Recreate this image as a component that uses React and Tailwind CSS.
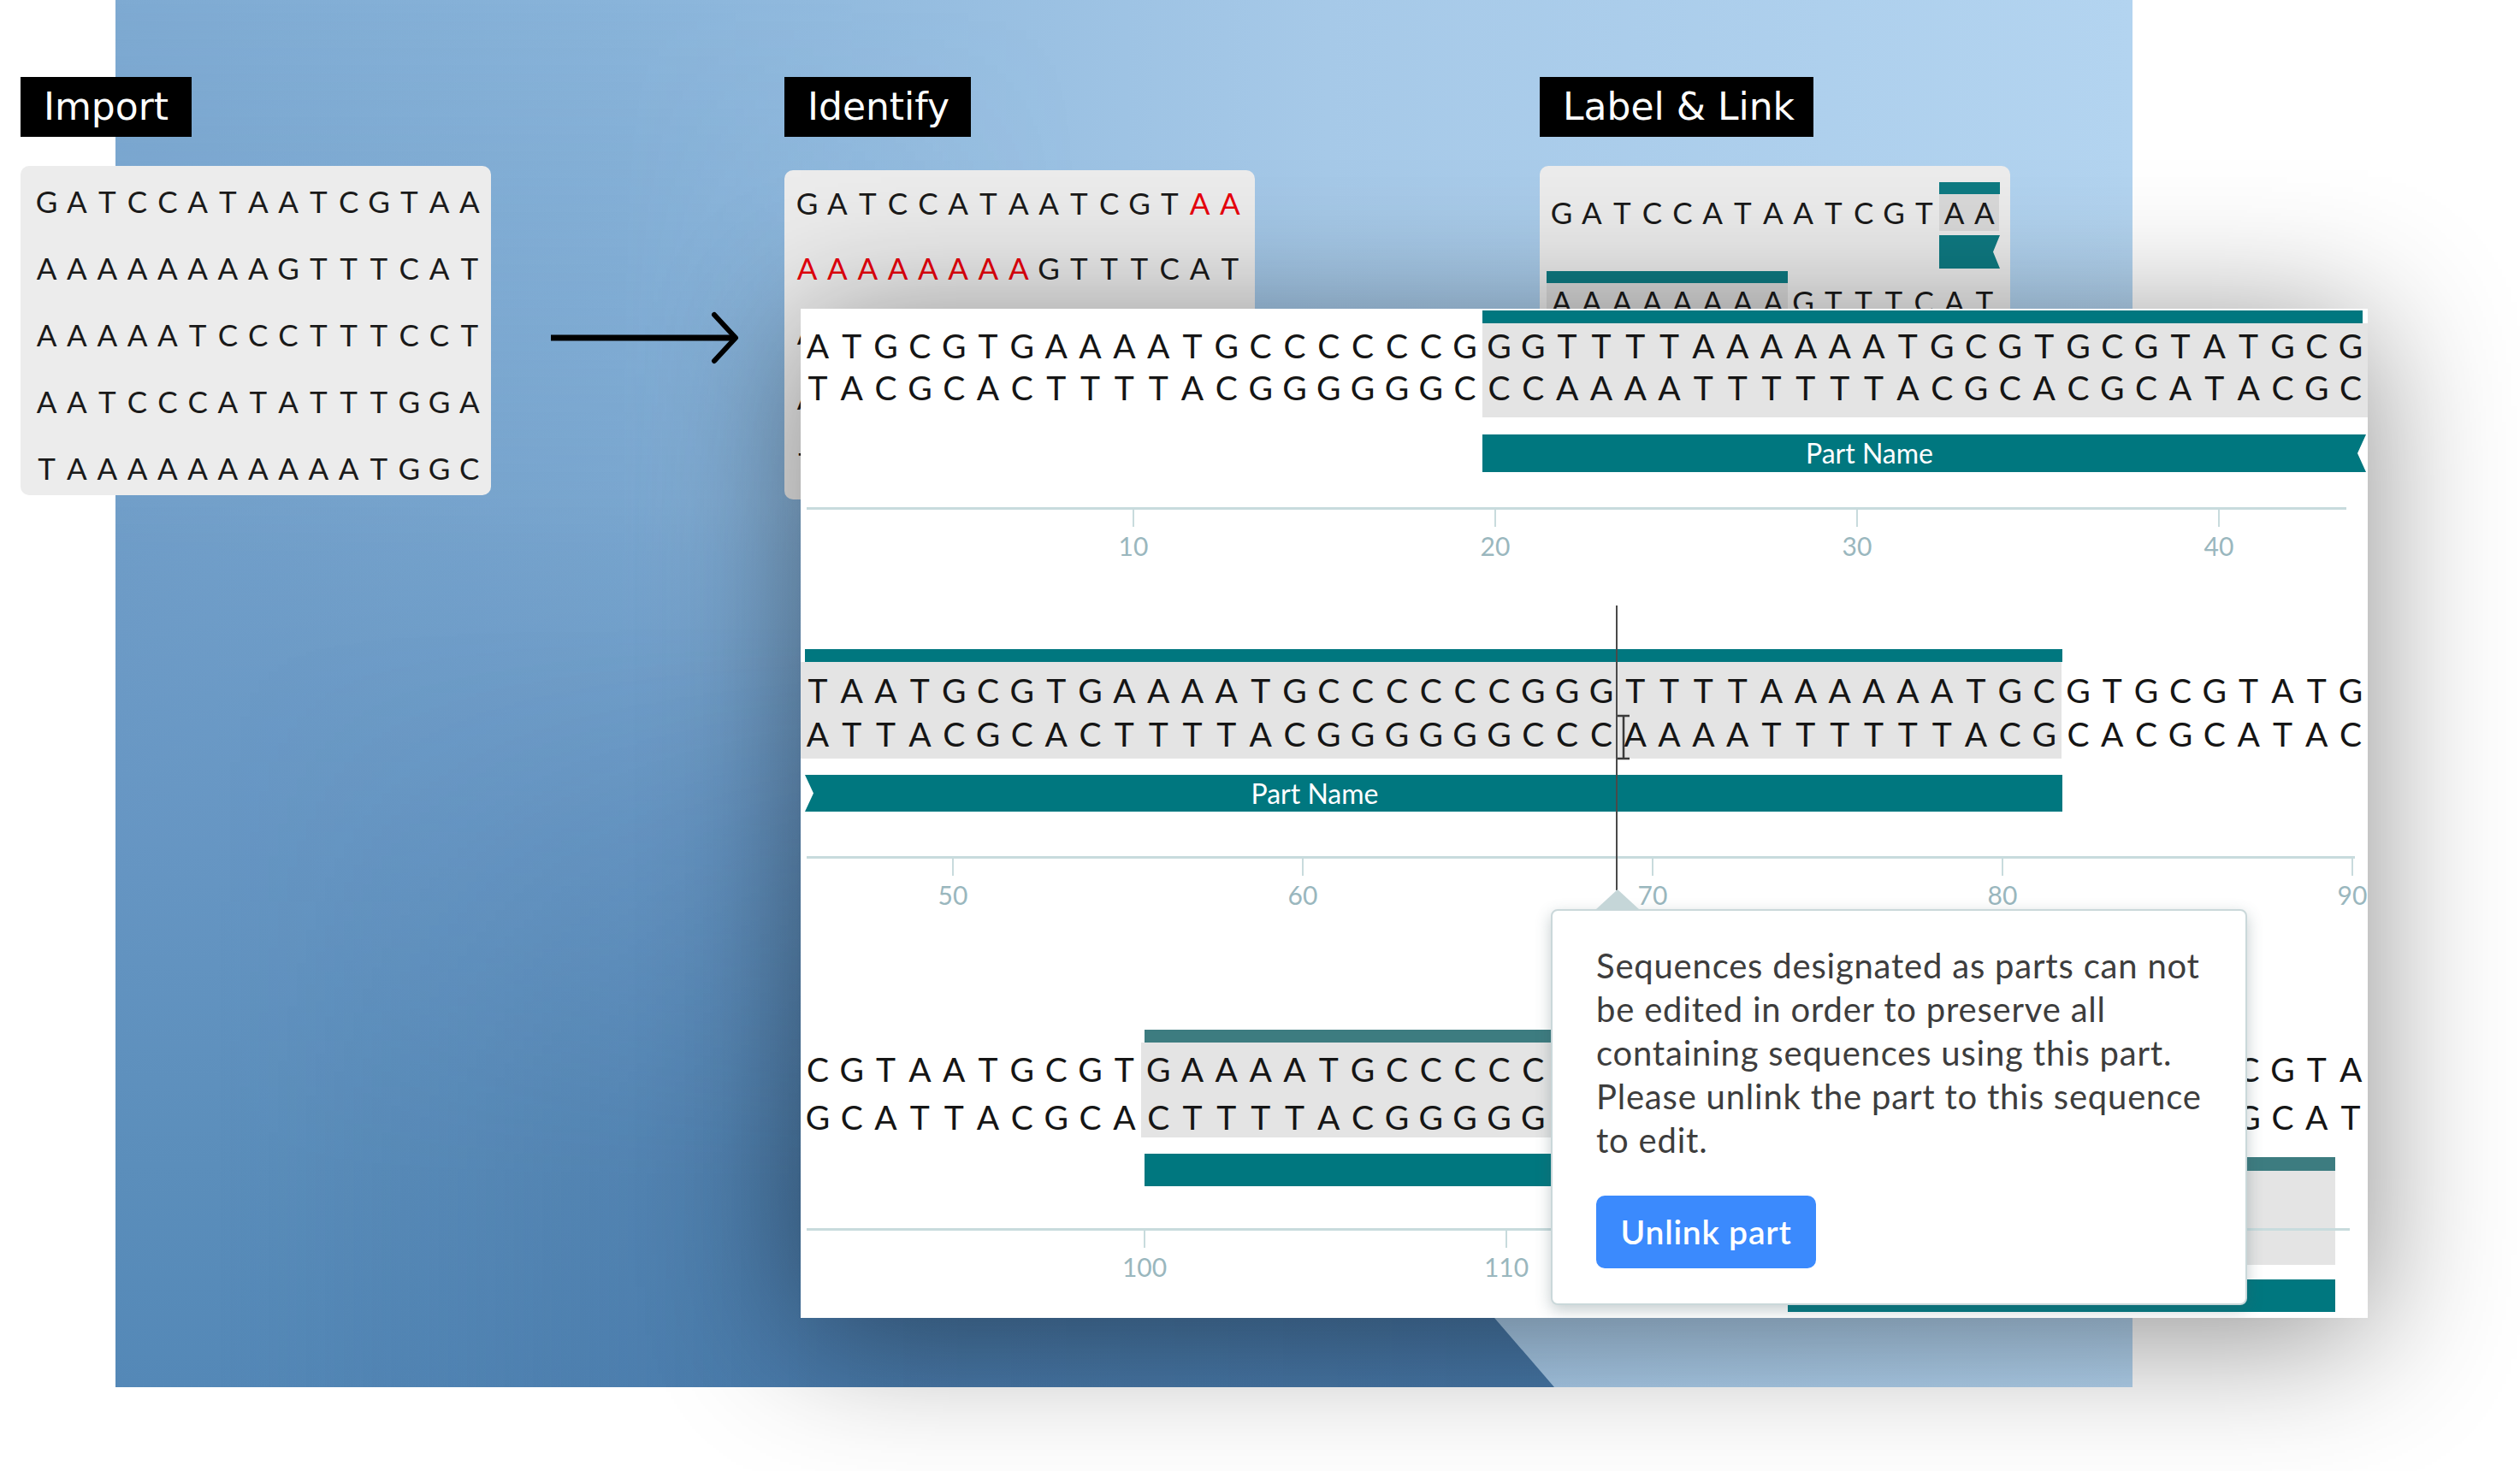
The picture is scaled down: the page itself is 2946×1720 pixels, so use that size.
import React from 'react';

const comp = (s) => s.split('').map((c) => ({ A: 'T', T: 'A', G: 'C', C: 'G' }[c])).join('');

const CARD_ROWS = ['GATCCATAATCGTAA', 'AAAAAAAAGTTTCAT', 'AAAAATCCCTTTCCT', 'AATCCCATATTTGGA', 'TAAAAAAAAAATGGC'];

const ROW1 = 'ATGCGTGAAAATGCCCCCCGGGTTTTAAAAAATGCGTGCGTATGCG';
const ROW2 = 'TAATGCGTGAAAATGCCCCCCGGGTTTTAAAAAATGCGTGCGTATG';
const ROW3 = 'CGTAATGCGTGAAAATGCCCCCCGGGTTTTAAAAAATGCGTGCGTA';

const Label = ({ children, className = '' }) => (
  <div className={`h-[70px] bg-black text-white text-[44px] leading-[70px] font-['DejaVu_Sans',sans-serif] pl-[27px] ${className}`}>
    {children}
  </div>
);

const CardRow = ({ seq, red = [], hl = [], className = '' }) => (
  <div className={`flex ${className}`}>
    {seq.split('').map((c, i) => (
      <span
        key={i}
        className={`w-[35.3px] text-center ${red.includes(i) ? 'text-[#e8000d]' : ''} ${hl.includes(i) ? 'bg-[#d9d9d9]' : ''}`}
      >
        {c}
      </span>
    ))}
  </div>
);

// hidden: cells covered by the tooltip, left blank
const Strand = ({ seq, from, to, className, hidden = [-1, -1] }) => {
  const bot = comp(seq);
  return (
    <div className="grid grid-cols-[repeat(46,minmax(0,1fr))]">
      {seq.split('').map((c, i) => {
        const gone = i >= hidden[0] && i < hidden[1];
        return (
          <div
            key={i}
            className={`flex flex-col items-center ${className} ${i >= from && i < to ? 'bg-[#e4e4e4]' : ''}`}
          >
            {!gone && <span>{c}</span>}
            {!gone && <span>{bot[i]}</span>}
          </div>
        );
      })}
    </div>
  );
};

const Axis = ({ className, line, ticks, labels }) => (
  <div className={`relative z-10 ${className}`}>
    <div className={`h-[3px] bg-[#c8dbdd] ${line}`} />
    <div className={`flex ${ticks}`}>
      {labels.map((l, i) => (
        <div key={i} className="w-[120px] shrink-0 flex flex-col items-center">
          <div className="w-[2px] h-[20px] bg-[#c8dbdd]" />
          <div className="mt-[7px] h-[30px] text-[30px] leading-[30px] text-[#9ab7be]">{l}</div>
        </div>
      ))}
    </div>
  </div>
);

const Arrow = ({ className }) => (
  <svg className={className} width="222" height="64" viewBox="0 0 222 64">
    <path d="M0 31H213" stroke="#000" strokeWidth="7" />
    <path d="M191 4L216 31L191 58" fill="none" stroke="#000" strokeWidth="6" strokeLinecap="round" strokeLinejoin="round" />
  </svg>
);

const App = () => {
  return (
    <div className="grid w-[2946px] h-[1720px] bg-white overflow-hidden font-['Lato',sans-serif]">
      {/* backdrop */}
      <div className="relative col-start-1 row-start-1 self-start justify-self-start ml-[135px] w-[2358px] h-[1622px] overflow-hidden bg-[linear-gradient(90deg,#7eaad2_0%,#89b4da_25%,#a6c9e8_60%,#b3d4f0_100%)]">
        <div className="absolute inset-0 bg-[linear-gradient(180deg,rgba(70,120,170,0)_0%,rgba(70,120,170,0.25)_40%,rgba(70,120,170,0.25)_100%)] [mask-image:linear-gradient(90deg,black_25%,transparent_48%)]" />
        <div className="absolute inset-0 [clip-path:polygon(0_0,281px_0,1682px_100%,0_100%)] bg-[linear-gradient(180deg,rgba(100,148,194,0)_36%,rgba(100,148,194,0.8)_60%,#5b8ebb_84%,#5488b7_100%)]" />
        <div className="absolute inset-0 [clip-path:polygon(0_0,281px_0,1682px_100%,0_100%)] bg-[linear-gradient(90deg,rgba(40,80,130,0)_5%,rgba(40,80,130,0.25)_35%,rgba(40,80,130,0.3)_70%)] [mask-image:linear-gradient(180deg,transparent_45%,black_85%)]" />
      </div>

      {/* steps */}
      <div className="relative col-start-1 row-start-1 self-start justify-self-start flex items-start pt-[90px] pl-[24px] text-[35px] text-[#1a1a1a]">
        <div className="flex flex-col items-start">
          <Label className="w-[200px]">Import</Label>
          <div className="mt-[34px] w-[550px] h-[385px] rounded-[10px] bg-[#ececec] pl-[13px] pt-[2px] leading-[78px]">
            {CARD_ROWS.map((r) => (
              <CardRow key={r} seq={r} />
            ))}
          </div>
        </div>

        <Arrow className="ml-[70px] mt-[274px] shrink-0" />

        <div className="ml-[51px] flex flex-col items-start">
          <Label className="w-[218px]">Identify</Label>
          <div className="mt-[39px] w-[550px] h-[385px] rounded-[10px] bg-[#ececec] pl-[9px] leading-[76px]">
            <CardRow seq={CARD_ROWS[0]} red={[13, 14]} />
            <CardRow seq={CARD_ROWS[1]} red={[0, 1, 2, 3, 4, 5, 6, 7]} />
            <CardRow seq="A" />
            <CardRow seq="A" />
            <CardRow seq="T" />
          </div>
        </div>

        <div className="ml-[333px] flex flex-col items-start">
          <Label className="w-[320px] pl-[26px]">Label &amp; Link</Label>
          <div className="mt-[34px] w-[550px] h-[385px] rounded-[10px] bg-[#ececec] pl-[8px] flex flex-col">
            <div className="mt-[19px] ml-[459px] w-[71px] h-[14px] bg-[#0e7a82]" />
            <CardRow seq={CARD_ROWS[0]} hl={[13, 14]} className="h-[43px] leading-[43px]" />
            <div className="mt-[5px] ml-[459px] w-[71px] h-[39px] bg-[#0e7a82] [clip-path:polygon(0_0,100%_0,calc(100%_-_8px)_50%,100%_100%,0_100%)]" />
            <div className="mt-[3px] w-[282px] h-[14px] bg-[#0e7a82]" />
            <CardRow seq={CARD_ROWS[1]} hl={[0, 1, 2, 3, 4, 5, 6, 7]} className="h-[43px] leading-[43px]" />
          </div>
        </div>
      </div>

      {/* sequence editor */}
      <div className="relative col-start-1 row-start-1 self-start justify-self-start mt-[361px] ml-[936px] w-[1832px] h-[1180px] overflow-hidden bg-white shadow-[0_20px_160px_rgba(0,0,0,0.45)] text-[39px] text-[#151515]">
        {/* row 1 */}
        <div className="mt-[2px] ml-[797px] w-[1029px] h-[15px] bg-[#00777f]" />
        <Strand seq={ROW1} from={20} to={46} className="h-[110px] pt-[2px] leading-[49px]" />
        <div className="mt-[20px] ml-[797px] w-[1033px] h-[44px] bg-[#00777f] [clip-path:polygon(0_0,100%_0,calc(100%_-_10px)_50%,100%_100%,0_100%)] flex items-center justify-center pr-[128px] text-[32px] text-white">
          Part Name
        </div>
        <Axis className="mt-[41px]" line="ml-[7px] w-[1800px]" ticks="ml-[329px] gap-[303px]" labels={['10', '20', '30', '40']} />

        {/* row 2 */}
        <div className="mt-[106px] ml-[5px] w-[1470px] h-[15px] bg-[#00777f]" />
        <Strand seq={ROW2} from={0} to={37} className="h-[113px] pt-[8px] leading-[51px]" />
        <div className="mt-[19px] ml-[5px] w-[1470px] h-[43px] bg-[#00777f] [clip-path:polygon(0_0,100%_0,100%_100%,0_100%,10px_50%)] flex items-center justify-center pr-[278px] text-[32px] text-white">
          Part Name
        </div>
        <Axis className="mt-[52px]" line="ml-[7px] w-[1810px]" ticks="ml-[118px] gap-[289px]" labels={['50', '60', '70', '80', '90']} />

        {/* row 3 */}
        <div className="mt-[143px] ml-[402px] w-[850px] h-[15px] bg-[#3d7c80]" />
        <Strand seq={ROW3} from={10} to={32} hidden={[22, 42]} className="h-[111px] pt-[3px] leading-[56px]" />
        <div className="mt-[19px] ml-[402px] w-[850px] h-[38px] bg-[#00777f]" />

        <div className="absolute left-[1691px] top-[992px] w-[103px] h-[16px] bg-[#3d7c80]" />
        <div className="absolute left-[1691px] top-[1008px] w-[103px] h-[110px] bg-[#e4e4e4]" />
        <div className="absolute left-[1154px] top-[1135px] w-[640px] h-[38px] bg-[#00777f]" />

        <Axis className="mt-[49px]" line="ml-[7px] w-[1804px]" ticks="ml-[342px] gap-[303px]" labels={['100', '110', '', '']} />

        {/* cursor */}
        <div className="absolute z-30 left-[953px] top-[347px] w-[2px] h-[333px] bg-[#4a4a4a]" />
        <svg className="absolute z-30 left-[951px] top-[474px]" width="22" height="54" viewBox="0 0 22 54">
          <path d="M4 2H18M11 2V52M4 52H18" stroke="#3a3a3a" strokeWidth="2.5" fill="none" />
        </svg>
        <svg className="absolute z-30 left-[929px] top-[679px]" width="52" height="24" viewBox="0 0 52 24">
          <polygon points="26,0 52,24 0,24" fill="#c5d6d8" />
        </svg>

        {/* tooltip */}
        <div className="absolute z-20 left-[877px] top-[702px] w-[814px] h-[463px] rounded-[8px] border-2 border-[#cad8da] bg-white shadow-[0_6px_18px_rgba(60,90,95,0.3)] pl-[51px] pt-[39px]">
          <div className="text-[40px] leading-[51px] tracking-[0.02em] text-[#3d3d3d]">
            <div>Sequences designated as parts can not</div>
            <div>be edited in order to preserve all</div>
            <div>containing sequences using this part.</div>
            <div>Please unlink the part to this sequence</div>
            <div>to edit.</div>
          </div>
          <button className="mt-[39px] w-[257px] h-[85px] rounded-[10px] bg-[#3b8afd] text-white text-[39px] font-semibold tracking-[0.02em] flex items-center justify-center">
            Unlink part
          </button>
        </div>
      </div>
    </div>
  );
};

export default App;
